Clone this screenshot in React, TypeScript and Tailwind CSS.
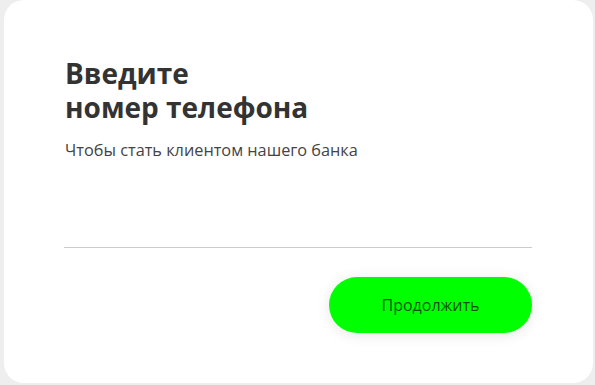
import React from "react";

export default function App() {
  return (
    <div
      className="w-[595px] h-[385px] bg-[#eeeeee] pl-[4px] pr-[2px] pb-[2px] overflow-hidden"
      style={{ fontFamily: '"Open Sans", "Noto Sans", sans-serif' }}
    >
      <div className="h-[383px] bg-white rounded-[20px] pl-[61px] pr-[61px] pt-[56px] flex flex-col">
        <h1 className="text-[28px] leading-[34px] font-bold text-[#333333]">
          Введите
          <br />
          номер телефона
        </h1>
        <p className="mt-[16px] text-[16.3px] leading-[20px] text-[#444444]">
          Чтобы стать клиентом нашего банка
        </p>
        <div className="mt-[87px] -ml-[1px] h-0 border-b border-[#cccccc]" />
        <div className="mt-[29px] flex justify-end">
          <button className="w-[203px] h-[56px] rounded-full bg-[#00ff00] text-[16px] text-black/70 shadow-[0_2px_14px_rgba(0,0,0,0.1)]">
            Продолжить
          </button>
        </div>
      </div>
    </div>
  );
}
